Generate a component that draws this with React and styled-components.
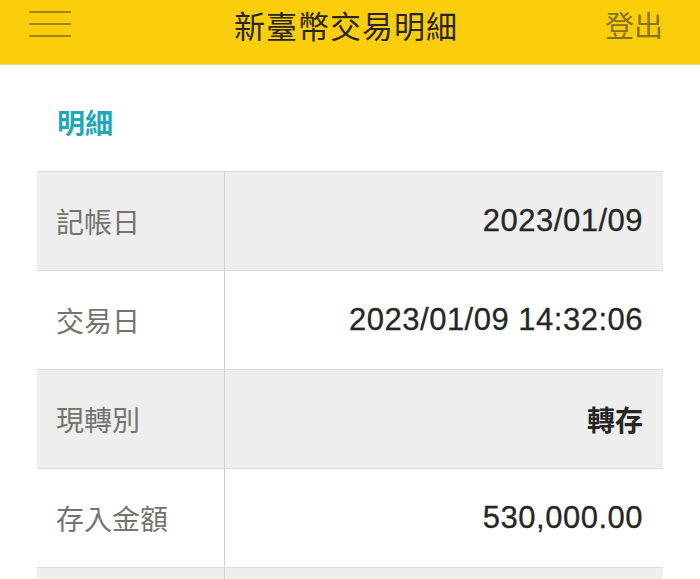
import React from 'react';
import styled, { createGlobalStyle } from 'styled-components';

const GlobalStyle = createGlobalStyle`
    html, body {
        margin: 0;
        padding: 0;
        background: #ffffff;
    }
    body {
        font-family: "Liberation Sans", "Noto Sans CJK TC", sans-serif;
    }
`;

const cjk = `"Noto Sans CJK TC", "Noto Sans", sans-serif`;

const Page = styled.div`
    width: 700px;
    height: 579px;
    overflow: hidden;
    background: #fff;
`;

const Header = styled.header`
    display: flex;
    align-items: flex-start;
    justify-content: space-between;
    height: 64px;
    padding: 0 37px 0 29px;
    background: #fccd0a;
    border-bottom: 1px solid #e9d48a;
`;

const HeaderBar = styled.div`
    display: flex;
    align-items: center;
    height: 48px;
    width: ${props => props.width || 'auto'};
    justify-content: ${props => props.align || 'flex-start'};
`;

const Title = styled.h1`
    margin: 0;
    font-family: ${cjk};
    font-size: 31px;
    font-weight: 400;
    color: #262626;
    letter-spacing: 1px;
`;

const Logout = styled.span`
    font-family: ${cjk};
    font-size: 29px;
    color: #857223;
`;

const Main = styled.main`
    padding: 0 37px;
`;

const SectionTitle = styled.h2`
    margin: 0;
    padding: 40px 0 0 20px;
    height: 66px;
    line-height: 34px;
    font-family: ${cjk};
    font-size: 28px;
    font-weight: 700;
    color: #1fa8b8;
`;

const Table = styled.div`
    display: flex;
    flex-direction: column;
    width: 626px;
    border-top: 1px solid #dcdcdc;
`;

const Row = styled.div`
    display: grid;
    grid-template-columns: 188px 1fr;
    height: 98px;
    background: ${props => (props.shaded ? '#eeeeee' : '#ffffff')};
    border-bottom: 1px solid #dcdcdc;
`;

const Label = styled.div`
    display: flex;
    align-items: center;
    padding-left: 19px;
    border-right: 1px solid #cfcfcf;
    font-family: ${cjk};
    font-size: 28px;
    color: #74746d;
`;

const Value = styled.div`
    display: flex;
    align-items: center;
    justify-content: flex-end;
    padding-right: 20px;
    font-family: ${props => (props.cjk ? cjk : `"Liberation Sans", sans-serif`)};
    font-size: ${props => (props.cjk ? '28px' : '31px')};
    font-weight: ${props => (props.cjk ? 700 : 400)};
    letter-spacing: ${props => (props.cjk ? '0' : '0.5px')};
    color: #262626;
    -webkit-text-stroke: ${props => (props.cjk ? '0' : '0.3px #262626')};
`;

const MenuIcon = () => (
    <svg width="42" height="28" viewBox="0 0 42 28" style={{ marginTop: 2 }}>
        <g stroke="#a4820f" strokeWidth="2">
            <line x1="0" y1="1" x2="42" y2="1" />
            <line x1="0" y1="13" x2="42" y2="13" />
            <line x1="0" y1="25" x2="42" y2="25" />
        </g>
    </svg>
);

const rows = [
    { label: '記帳日', value: '2023/01/09' },
    { label: '交易日', value: '2023/01/09 14:32:06' },
    { label: '現轉別', value: '轉存', cjk: true },
    { label: '存入金額', value: '530,000.00' },
    { label: '', value: '' },
];

export default function App() {
    return (
        <Page>
            <GlobalStyle />
            <Header>
                <HeaderBar width="90px">
                    <MenuIcon />
                </HeaderBar>
                <HeaderBar>
                    <Title>新臺幣交易明細</Title>
                </HeaderBar>
                <HeaderBar width="90px" align="flex-end">
                    <Logout>登出</Logout>
                </HeaderBar>
            </Header>
            <Main>
                <SectionTitle>明細</SectionTitle>
                <Table>
                    {rows.map((r, i) => (
                        <Row key={i} shaded={i % 2 === 0}>
                            <Label>{r.label}</Label>
                            <Value cjk={r.cjk}>{r.value}</Value>
                        </Row>
                    ))}
                </Table>
            </Main>
        </Page>
    );
}
